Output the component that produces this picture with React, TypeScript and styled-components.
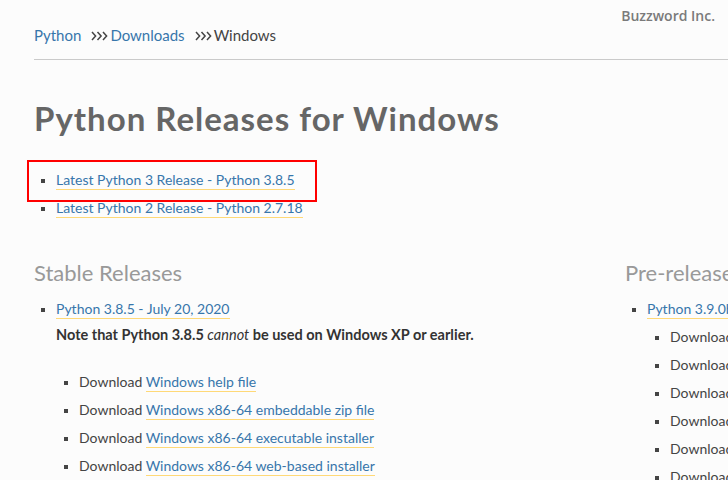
import React from "react";
import styled, { createGlobalStyle } from "styled-components";

const Global = createGlobalStyle`
  html, body { margin: 0; padding: 0; background: #fcfcfc; }
  body { font-family: Lato, "Noto Sans", sans-serif; color: #444; width: 728px; height: 480px; overflow: hidden; }
`;

const Page = styled.div`
  position: relative;
  width: 728px;
  height: 480px;
  overflow: hidden;
  padding-left: 34px;
  box-sizing: border-box;
`;

const Watermark = styled.div`
  position: absolute;
  top: 6px;
  right: 13px;
  font-family: "Open Sans", sans-serif;
  font-weight: 600;
  font-size: 14px;
  color: #7a7a7a;
`;

const Breadcrumb = styled.nav`
  display: flex;
  align-items: center;
  height: 60px;
  padding-top: 10px;
  box-sizing: border-box;
  font-size: 15px;
  border-bottom: 1px solid #cacaca;
  white-space: nowrap;
`;

const Crumb = styled.a<{ $current?: boolean }>`
  color: ${(p) => (p.$current ? "#444" : "#3776ab")};
  text-decoration: none;
`;

const SepIcon = styled.svg`
  display: block;
  width: 17px;
  height: 10px;
  margin: 2px 2px 0 10px;
`;

const Sep = () => (
  <SepIcon viewBox="0 0 17 10" aria-hidden="true">
    <path
      d="M1 1l3.6 4L1 9M6.5 1l3.6 4-3.6 4M12 1l3.6 4-3.6 4"
      fill="none"
      stroke="#444"
      strokeWidth="1.5"
    />
  </SepIcon>
);

const Title = styled.h1`
  margin: 35px 0 0;
  font-size: 33px;
  line-height: 46px;
  font-weight: 700;
  color: #666;
  letter-spacing: 1px;
  white-space: nowrap;
`;

const List = styled.ul<{ $indent?: number; $top?: number }>`
  list-style: none;
  margin: ${(p) => p.$top ?? 0}px 0 0;
  padding: 0 0 0 ${(p) => p.$indent ?? 22}px;
`;

const Item = styled.li`
  position: relative;
  font-size: 14px;
  line-height: 28px;
  white-space: nowrap;
  &::before {
    content: "";
    position: absolute;
    left: -15px;
    top: 13px;
    width: 4px;
    height: 4px;
    background: #444;
  }
`;

const Link = styled.a`
  color: #3776ab;
  text-decoration: none;
  border-bottom: 1px solid #ffd977;
  padding-bottom: 1px;
`;

const Highlight = styled.div`
  position: absolute;
  left: 27px;
  top: 160px;
  width: 290px;
  height: 42px;
  border: 2px solid #f00;
  box-sizing: border-box;
`;

const Columns = styled.div`
  display: grid;
  grid-template-columns: 591px 300px;
  margin-top: 36px;
`;

const Column = styled.section``;

const SubTitle = styled.h2`
  margin: 0 0 7px;
  font-size: 22px;
  line-height: 30px;
  font-weight: 400;
  color: #999;
  white-space: nowrap;
`;

const Note = styled.p`
  margin: 0 0 21px;
  font-size: 14.5px;
  font-weight: 700;
  line-height: 24px;
  color: #333;
`;

const Em = styled.em`
  font-weight: 400;
`;

export default function App() {
  return (
    <>
      <Global />
      <Page>
        <Watermark>Buzzword Inc.</Watermark>
        <Breadcrumb>
          <Crumb href="#">Python</Crumb>
          <Sep />
          <Crumb href="#">Downloads</Crumb>
          <Sep />
          <Crumb $current>Windows</Crumb>
        </Breadcrumb>
        <Title>Python Releases for Windows</Title>
        <List $top={25}>
          <Item><Link href="#">Latest Python 3 Release - Python 3.8.5</Link></Item>
          <Item><Link href="#">Latest Python 2 Release - Python 2.7.18</Link></Item>
        </List>
        <Columns>
          <Column>
            <SubTitle>Stable Releases</SubTitle>
            <List>
              <Item>
                <Link href="#">Python 3.8.5 - July 20, 2020</Link>
                <Note>Note that Python 3.8.5 <Em>cannot</Em> be used on Windows XP or earlier.</Note>
                <List $indent={23}>
                  <Item>Download <Link href="#">Windows help file</Link></Item>
                  <Item>Download <Link href="#">Windows x86-64 embeddable zip file</Link></Item>
                  <Item>Download <Link href="#">Windows x86-64 executable installer</Link></Item>
                  <Item>Download <Link href="#">Windows x86-64 web-based installer</Link></Item>
                </List>
              </Item>
            </List>
          </Column>
          <Column>
            <SubTitle>Pre-releases</SubTitle>
            <List>
              <Item>
                <Link href="#">Python 3.9.0b5 - July 20, 2020</Link>
                <List $indent={23}>
                  <Item>Download Windows help file</Item>
                  <Item>Download Windows x86-64 embeddable zip file</Item>
                  <Item>Download Windows x86-64 executable installer</Item>
                  <Item>Download Windows x86-64 web-based installer</Item>
                  <Item>Download Windows x86 embeddable zip file</Item>
                  <Item>Download Windows x86 executable installer</Item>
                </List>
              </Item>
            </List>
          </Column>
        </Columns>
      </Page>
      <Highlight />
    </>
  );
}
